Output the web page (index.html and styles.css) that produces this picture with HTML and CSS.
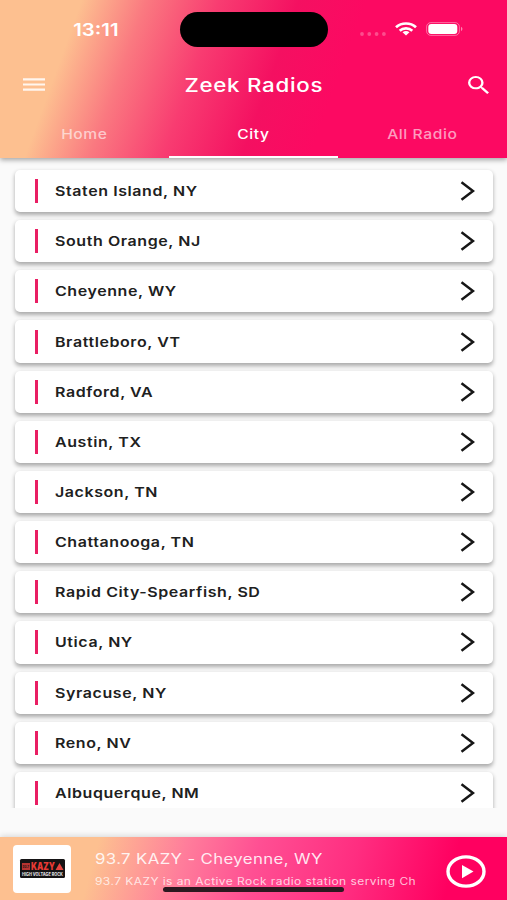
FILE: index.html
```html
<!DOCTYPE html>
<html lang="en">
<head>
  <meta charset="UTF-8" />
  <meta name="viewport" content="width=device-width, initial-scale=1.0"/>
  <title>Zeek Radios</title>
  <link rel="stylesheet" href="styles.css">
</head>
<body>
  <header class="header">
    <div class="status-bar">
      <div class="time"><span class="wide">13:11</span></div>
      <div class="island"></div>
      <div class="status-icons">
        <svg width="26" height="4" viewBox="0 0 26 4" fill="#fff" fill-opacity=".28"><circle cx="2" cy="2" r="1.900"/><circle cx="9.300" cy="2" r="1.900"/><circle cx="16.600" cy="2" r="1.900"/><circle cx="23.900" cy="2" r="1.900"/></svg>
        <svg class="wifi" width="22" height="14" viewBox="0 0 22 14" fill="none" stroke="#fff" stroke-width="2.700"><path d="M1 5.300C6.500.2 15.500.2 21 5.300"/><path d="M4.700 8.700C8.200 5.500 13.800 5.500 17.300 8.700"/><path d="M7.500 10.300Q11 7.800 14.500 10.300L11 13.600Z" fill="#fff" stroke="none"/></svg>
        <svg class="battery" width="37" height="14" viewBox="0 0 37 14"><rect x=".6" y=".6" width="32.800" height="12.800" rx="4.200" fill="none" stroke="#fff" stroke-opacity=".4"/><rect x="2.300" y="2.100" width="29" height="9.800" rx="3" fill="#fff"/><path d="M35 4.800Q38 7 35 9.200Z" fill="#fff" fill-opacity=".5"/></svg>
      </div>
    </div>
    <div class="app-bar">
      <svg width="22" height="13" viewBox="0 0 22 13" fill="#fff" fill-opacity=".85"><path d="M0 .3h22v2.200H0zM0 5.400h22v2.200H0zM0 10.500h22v2.200H0z"/></svg>
      <h1><span class="wide">Zeek Radios</span></h1>
      <svg width="21" height="18" viewBox="3 3 17.500 17.500" preserveAspectRatio="none" fill="#fff"><path d="M15.500 14h-.79l-.28-.27A6.471 6.471 0 0 0 16 9.500 6.500 6.500 0 1 0 9.500 16c1.610 0 3.090-.59 4.230-1.570l.27.28v.79l5 4.990L20.490 19l-4.990-5zm-6 0C7.010 14 5 11.990 5 9.500S7.010 5 9.500 5 14 7.010 14 9.500 11.990 14 9.500 14z"/></svg>
    </div>
    <nav class="tabs">
      <div class="tab"><span class="wide">Home</span></div>
      <div class="tab active"><span class="wide">City</span></div>
      <div class="tab"><span class="wide">All Radio</span></div>
    </nav>
  </header>

  <main class="city-list" id="cityList"></main>

  <footer class="player">
    <div class="cover">
      <svg class="logo" width="45" height="19" viewBox="0 0 45 19"><rect width="45" height="19" rx="1.500" fill="#151314"/><rect x="2" y="4" width="8" height="7" fill="#b93431"/><path d="M35.500 11L39.500 4L43.500 11Z" fill="#e5443f"/><text class="logo-small" x="2.600" y="9" textLength="6.500" lengthAdjust="spacingAndGlyphs">93.7</text><text class="logo-name" x="11" y="11" textLength="24" lengthAdjust="spacingAndGlyphs">KAZY</text><text class="logo-tag" x="2" y="16.500" textLength="41" lengthAdjust="spacingAndGlyphs">HIGH VOLTAGE ROCK</text></svg>
    </div>
    <div class="track">
      <div class="track-title"><span class="wide">93.7 KAZY - Cheyenne, WY</span></div>
      <div class="track-text"><span class="wide">93.7 KAZY is an Active Rock radio station serving Ch</span></div>
    </div>
    <svg class="play" width="40" height="33" viewBox="0 0 40 33"><ellipse cx="20" cy="16.500" rx="18" ry="14.600" fill="none" stroke="#fff" stroke-width="3.400"/><path d="M16 10L27.500 16.500L16 23.300Z" fill="#fff"/></svg>
    <div class="home-indicator"></div>
  </footer>

  <script>
    const cities = [
      "Staten Island, NY", "South Orange, NJ", "Cheyenne, WY", "Brattleboro, VT",
      "Radford, VA", "Austin, TX", "Jackson, TN", "Chattanooga, TN",
      "Rapid City-Spearfish, SD", "Utica, NY", "Syracuse, NY", "Reno, NV", "Albuquerque, NM"
    ];

    document.getElementById("cityList").innerHTML = cities.map(city => `
      <div class="city-card">
        <span class="bar"></span>
        <span class="city-name"><span class="wide">${city}</span></span>
        <svg width="15" height="20" viewBox="0 0 15 20" fill="none" stroke="#161616" stroke-width="2.500"><path d="M1.500 1.300L13 10L1.500 18.700"/></svg>
      </div>
    `).join("");
  </script>
</body>
</html>
```
FILE: styles.css
```css
:root {
  --pink: #fc0962;
  --peach: #fdc090;
  --bg: #fafafa;
  --text: #202020;
  --font-family: Inter, Roboto, sans-serif;
}

* {
  box-sizing: border-box;
}

body {
  margin: 0;
  height: 900px;
  overflow: hidden;
  display: flex;
  flex-direction: column;
  background-color: var(--bg);
  font-family: var(--font-family);
  color: #fff;
}

svg {
  display: block;
  flex: none;
}

.wide {
  display: inline-block;
  white-space: nowrap;
  transform: scaleX(1.2);
}

.header {
  height: 158px;
  flex: none;
  position: relative;
  z-index: 1;
  background: linear-gradient(110deg, var(--peach) 14.5%, #fa7980 26%, #f83c71 39%, #f41061 53%, var(--pink) 65%);
  box-shadow: 0 2px 5px rgba(0, 0, 0, 0.35);
}

.status-bar {
  height: 59px;
  display: grid;
  grid-template-columns: 180px 148px 1fr;
  align-items: center;
}

.time {
  padding-left: 12px;
  text-align: center;
  font-size: 17px;
  font-weight: 600;
}

.island {
  height: 35px;
  border-radius: 18px;
  background-color: #000;
}

.status-icons {
  display: flex;
  align-items: center;
  padding-left: 32px;
  margin-top: -2px;
}

.status-icons svg:first-child {
  margin-top: 10px;
}

.wifi {
  margin-left: 9px;
}

.battery {
  margin-left: 9px;
}

.app-bar {
  height: 51px;
  display: flex;
  align-items: center;
  justify-content: space-between;
  padding: 0 18px 0 23px;
}

.app-bar h1 {
  margin: 0 5px 0 0;
  font-size: 18.6px;
  font-weight: 500;
  letter-spacing: 0.6px;
}

.tabs {
  height: 48px;
  display: grid;
  grid-template-columns: repeat(3, 1fr);
}

.tab {
  padding-top: 4px;
  line-height: 40px;
  text-align: center;
  font-size: 13px;
  font-weight: 500;
  letter-spacing: 0.5px;
  color: rgba(255, 255, 255, 0.6);
  border-bottom: 2px solid transparent;
}

.tab.active {
  color: #fff;
  border-bottom-color: #fff;
}

.city-list {
  height: 650px;
  flex: none;
  overflow: hidden;
  padding: 12px 14px 0 15px;
  display: flex;
  flex-direction: column;
  gap: 8px;
}

.city-card {
  height: 42.17px;
  flex: none;
  display: flex;
  align-items: center;
  padding: 0 18.5px 0 20px;
  background-color: #fff;
  border-radius: 5px;
  box-shadow: 0 2.5px 4px rgba(0, 0, 0, 0.32);
}

.bar {
  width: 3px;
  height: 24px;
  background-color: #e91e63;
}

.city-name {
  flex: 1;
  padding-left: 17px;
  font-size: 13.3px;
  font-weight: 600;
  letter-spacing: 0.5px;
  color: var(--text);
}

.city-name .wide,
.track .wide {
  transform-origin: left;
}

.player {
  height: 63px;
  margin-top: auto;
  flex: none;
  position: relative;
  display: flex;
  align-items: center;
  padding: 0 21px 0 13px;
  background: linear-gradient(105deg, var(--peach) 19%, #ff7d9b 36%, #ff4f93 50%, #ff2d80 69%, #ff0060 88%);
  box-shadow: 0 -1px 6px rgba(0, 0, 0, 0.15);
}

.cover {
  width: 58px;
  height: 48px;
  display: flex;
  align-items: center;
  justify-content: center;
  background-color: #fff;
  border-radius: 4px;
}

.logo {
  overflow: visible;
}

.logo-small {
  font-size: 4px;
  font-weight: 700;
  fill: #1b1516;
}

.logo-name {
  font-size: 10px;
  font-weight: 900;
  fill: #e83a34;
}

.logo-tag {
  font-size: 4.5px;
  font-weight: 800;
  fill: #ddd;
}

.track {
  flex: 1;
  padding: 4px 0 0 24px;
}

.track-title {
  height: 25px;
  font-size: 14px;
  letter-spacing: 0.3px;
  color: rgba(255, 255, 255, 0.88);
}

.track-text {
  height: 17px;
  font-size: 10px;
  letter-spacing: 0.36px;
  color: rgba(255, 255, 255, 0.75);
}

.play {
  margin-top: 5px;
}

.home-indicator {
  position: absolute;
  left: 163px;
  bottom: 8px;
  width: 181px;
  height: 5px;
  border-radius: 3px;
  background-color: #2b1820;
}
```
